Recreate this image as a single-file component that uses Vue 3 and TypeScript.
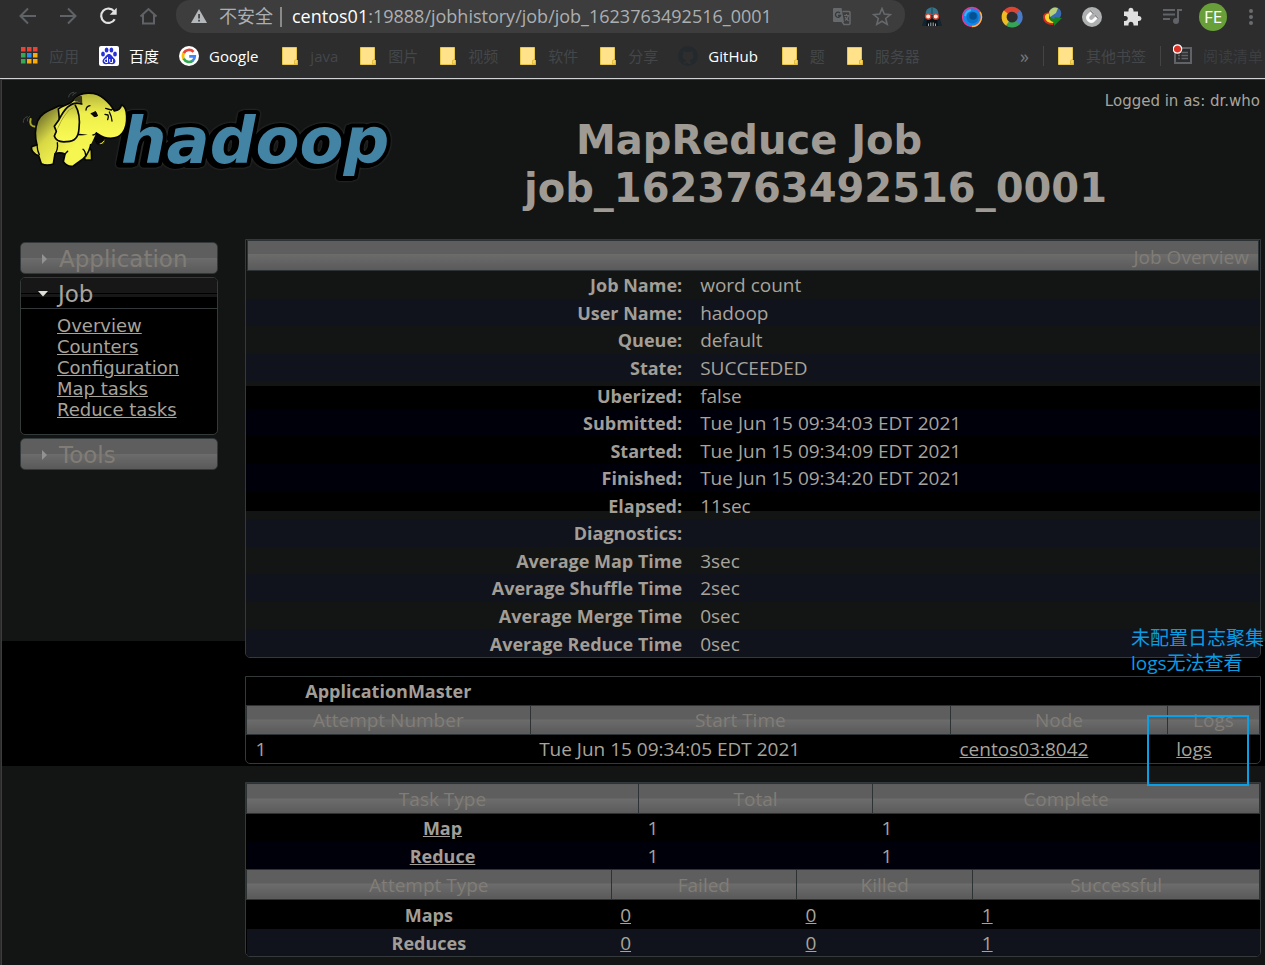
<script setup lang="ts">
interface Bookmark { label: string; icon: 'apps' | 'baidu' | 'google' | 'folder' | 'github'; bright?: boolean; latin?: boolean }
interface InfoRow { label: string; value: string; tone: string }

const bookmarks: Bookmark[] = [
  { label: '应用', icon: 'apps' },
  { label: '百度', icon: 'baidu', bright: true },
  { label: 'Google', icon: 'google', bright: true, latin: true },
  { label: 'java', icon: 'folder' },
  { label: '图片', icon: 'folder' },
  { label: '视频', icon: 'folder' },
  { label: '软件', icon: 'folder' },
  { label: '分享', icon: 'folder' },
  { label: 'GitHub', icon: 'github', bright: true, latin: true },
  { label: '题', icon: 'folder' },
  { label: '服务器', icon: 'folder' },
]

const info: InfoRow[] = [
  { label: 'Job Name:', value: 'word count', tone: '' },
  { label: 'User Name:', value: 'hadoop', tone: 'even' },
  { label: 'Queue:', value: 'default', tone: '' },
  { label: 'State:', value: 'SUCCEEDED', tone: 'even' },
  { label: 'Uberized:', value: 'false', tone: '' },
  { label: 'Submitted:', value: 'Tue Jun 15 09:34:03 EDT 2021', tone: 'even-dark' },
  { label: 'Started:', value: 'Tue Jun 15 09:34:09 EDT 2021', tone: '' },
  { label: 'Finished:', value: 'Tue Jun 15 09:34:20 EDT 2021', tone: 'even-dark' },
  { label: 'Elapsed:', value: '11sec', tone: '' },
  { label: 'Diagnostics:', value: '', tone: 'even' },
  { label: 'Average Map Time', value: '3sec', tone: '' },
  { label: 'Average Shuffle Time', value: '2sec', tone: 'even' },
  { label: 'Average Merge Time', value: '0sec', tone: '' },
  { label: 'Average Reduce Time', value: '0sec', tone: 'even' },
]

const jobLinks = ['Overview', 'Counters', 'Configuration', 'Map tasks', 'Reduce tasks']
const appColors = ['#ea4335', '#ea4335', '#ea4335', '#34a853', '#2a8cf0', '#fbab05', '#34a853', '#fbab05', '#fbab05']
</script>

<template>
  <div class="window">
    <header class="chrome">
      <div class="toolbar">
        <button class="tool" aria-label="Back">
          <svg width="20" height="20" viewBox="0 0 20 20" fill="none" stroke="#5f6368" stroke-width="2"><path d="M18 9H3M10 1.500L2.500 9l7.500 7.500" /></svg>
        </button>
        <button class="tool" aria-label="Forward">
          <svg width="20" height="20" viewBox="0 0 20 20" fill="none" stroke="#5f6368" stroke-width="2"><path d="M2 9h15M10 1.500l7.500 7.500L10 16.500" /></svg>
        </button>
        <button class="tool" aria-label="Reload">
          <svg width="20" height="20" viewBox="0 0 20 20"><path d="M16.700 12.200A7.200 7.200 0 1 1 16 4.200" fill="none" stroke="#e2e2e2" stroke-width="2.200" /><path d="M18.700 .700v7h-7z" fill="#e2e2e2" /></svg>
        </button>
        <button class="tool" aria-label="Home">
          <svg width="20" height="20" viewBox="0 0 20 20" fill="none" stroke="#5f6368" stroke-width="2"><path d="M2.500 9.500L10.500 2l8 7.500M5 8v8.500h11V8" /></svg>
        </button>
        <div class="omnibox">
          <svg width="16" height="16" viewBox="0 0 16 16"><path d="M8 0L16 14H0z" fill="#b5b8bb" /><path d="M7.200 5h1.700v4.500H7.200zM7.200 10.700h1.700v1.700H7.200z" fill="#3d3d3d" /></svg>
          <span class="insecure">不安全</span>
          <span class="bar"></span>
          <span class="url"><b>centos01</b>:19888/jobhistory/job/job_1623763492516_0001</span>
          <svg width="20" height="20" viewBox="0 0 20 20"><path d="M2 1h7.500l2.500 14H2q-1 0-1-1V2q0-1 1-1z" fill="#66696c" /><path d="M10.500 4.500H17q1 0 1 1v11q0 1-1 1h-5l-2-3" fill="none" stroke="#66696c" stroke-width="1.500" /><path d="M8 6a2.600 2.600 0 1 0 .5 2.500H6" fill="none" stroke="#37393b" stroke-width="1.300" /><path d="M12 8.500h5M14.500 7v1.500M16.500 8.500q-1 3.500-3.500 5M13 10l3.500 4" fill="none" stroke="#66696c" stroke-width="1.200" /></svg>
          <svg class="star" width="20" height="20" viewBox="0 0 20 20"><path d="M10 1.500l2.300 5.600 6 .5-4.600 3.900 1.500 5.900L10 14.200l-5.200 3.200 1.500-5.900-4.600-3.900 6-.5z" fill="none" stroke="#66696c" stroke-width="1.600" /></svg>
        </div>
        <button class="tool" aria-label="Dark reader">
          <svg width="22" height="20" viewBox="0 0 22 20"><path d="M11 0Q4 1 4 9L1 19h20L18 9Q18 1 11 0z" fill="#10252f" /><path d="M11 0Q4 1 4.500 8h13Q18 1 11 0z" fill="#35738a" /><path d="M11 0v7" stroke="#1c4657" /><path d="M6 12h10l1 7H5z" fill="#0b1115" /><circle cx="7.200" cy="9.500" r="2.700" fill="#ffeadf" stroke="#c9402e" stroke-width="1.300" /><circle cx="14.800" cy="9.500" r="2.700" fill="#ffeadf" stroke="#c9402e" stroke-width="1.300" /><path d="M7.500 16.500V19M9.800 15.500V19M12.200 15.500V19M14.500 16.500V19" stroke="#9fb0b8" /></svg>
        </button>
        <button class="tool" aria-label="Search extension">
          <svg width="22" height="22" viewBox="0 0 22 22"><circle cx="11" cy="11" r="9.500" fill="#1589ea" stroke="#e63a9b" stroke-width="1.300" /><path d="M11 20.500A9.500 9.500 0 0 0 19 6" fill="none" stroke="#ffb13d" stroke-width="1.500" /><circle cx="11.500" cy="11.500" r="6" fill="#0871cb" /><circle cx="12" cy="10" r="3.800" fill="#07508f" /><path d="M4 10Q5 5 10 4" stroke="#35b5f5" stroke-width="2" fill="none" /></svg>
        </button>
        <button class="tool" aria-label="Color ring">
          <svg width="22" height="22" viewBox="0 0 22 22" fill="none" stroke-width="5"><path d="M4.600 6.500A8 8 0 0 1 17 6" stroke="#dc4433" /><path d="M17 5.500A8 8 0 0 1 16.500 17" stroke="#4a7bc8" /><path d="M17 16.500A8 8 0 0 1 6 17.300" stroke="#35a457" /><path d="M6.500 17.500A8 8 0 0 1 4.800 6" stroke="#eebd23" /></svg>
        </button>
        <button class="tool" aria-label="Download manager">
          <svg width="22" height="20" viewBox="0 0 22 20"><path d="M10 5Q1 5 2 11q1 7 10 7l1-4q-5 0-5-4z" fill="#d22b23" /><path d="M9 6Q3 7 4 11q1 5 8 5l1-2q-5 0-5-4z" fill="#fad52c" /><circle cx="14" cy="6.500" r="6.300" fill="#3a6ab0" /><path d="M8 5Q11-1 17 1L15 6l-6 4z" fill="#b8cf78" /><path d="M8 10l5 2 1-2 7 1-8 8v-4q-4 0-5-5z" fill="#16821f" /></svg>
        </button>
        <button class="tool" aria-label="Clip">
          <svg width="22" height="22" viewBox="0 0 22 22"><circle cx="11" cy="11" r="10" fill="#aeb0b1" /><path d="M11.500 5.500L7.300 9.700a3.600 3.600 0 0 0 5 5L16.500 10.500" fill="none" stroke="#fff" stroke-width="3" /><path d="M9.300 4.500l3.200 3.200M14.200 9.300l3.200 3.200" stroke="#888" stroke-width="1.300" /></svg>
        </button>
        <button class="tool" aria-label="Extensions">
          <svg width="20" height="20" viewBox="0 0 20 20"><path d="M2 4.500h4.500V3.200a2.500 2.500 0 0 1 5 0v1.300H16V9h1a2.500 2.500 0 0 1 0 5h-1v4.500h-4.500v-1.300a2.500 2.500 0 0 0-5 0v1.300H2V14h1.300a2.500 2.500 0 0 0 0-5H2z" fill="#e0e0e0" /></svg>
        </button>
        <button class="tool" aria-label="Media">
          <svg width="20" height="18" viewBox="0 0 20 18"><path d="M1 2h12M1 6.500h12M1 11h7M16 13V2h4" fill="none" stroke="#606367" stroke-width="2" /><circle cx="14" cy="13" r="3" fill="#606367" /></svg>
        </button>
        <button class="avatar">FE</button>
        <button class="more" aria-label="Menu">
          <svg width="6" height="18" viewBox="0 0 6 18" fill="#6a6d70"><circle cx="3" cy="3" r="2" /><circle cx="3" cy="9" r="2" /><circle cx="3" cy="15" r="2" /></svg>
        </button>
      </div>

      <nav class="bookmarks">
        <a v-for="b in bookmarks" :key="b.label" href="#" class="bookmark" :class="{ bright: b.bright, latin: b.latin }">
          <svg v-if="b.icon === 'apps'" width="20" height="20" viewBox="0 0 20 20">
            <rect v-for="(c, i) in appColors" :key="i" :x="2 + (i % 3) * 6" :y="1 + Math.floor(i / 3) * 6" width="4.500" height="4.500" :fill="c" />
          </svg>
          <svg v-else-if="b.icon === 'baidu'" width="20" height="20" viewBox="0 0 20 20"><rect width="20" height="20" rx="2" fill="#fff" /><g fill="#2831d8"><ellipse cx="4" cy="8" rx="1.900" ry="2.500" /><ellipse cx="7.600" cy="4" rx="1.900" ry="2.600" /><ellipse cx="12.400" cy="4" rx="1.900" ry="2.600" /><ellipse cx="16" cy="8" rx="1.900" ry="2.500" /><path d="M10 8c2.500 0 3 2.500 5 4.200 3 2.800 1 6.300-2 6-2-.3-4-.3-6 0-3 .3-5-3.200-2-6C7 10.500 7.500 8 10 8z" /></g><path d="M8.500 11v5.500H7q-1.500-.2-1.500-1.700T7 13h1.500M10.700 13v2.500q0 1 1 1h1.800V13" fill="none" stroke="#fff" /></svg>
          <svg v-else-if="b.icon === 'google'" width="20" height="20" viewBox="0 0 20 20"><circle cx="10" cy="10" r="10" fill="#fff" /><g fill="none" stroke-width="2.700"><path d="M14.500 5.800A6 6 0 0 0 4.700 7.300" stroke="#ea4335" /><path d="M4.800 7A6 6 0 0 0 4.800 13" stroke="#fbbc05" /><path d="M4.700 12.700A6 6 0 0 0 14 14.500" stroke="#34a853" /><path d="M13.600 14.800Q15.800 13 15.800 10.300H10.200" stroke="#4285f4" /></g></svg>
          <svg v-else-if="b.icon === 'github'" width="20" height="20" viewBox="0 0 20 20"><circle cx="10" cy="10" r="10" fill="#24292e" /><path d="M7.500 19v-3q-3 .5-4-2M7.500 16q.2-1.300 1-1.800C3.500 13.500 4 9 5.500 7.500q-.4-1.500.2-2.500 1 0 2.500 1h3.600q1.500-1 2.500-1 .6 1 .2 2.500C16 9 16.500 13.500 11.500 14.200q1 .6 1 2.300V19z" fill="#2e2e2e" /></svg>
          <svg v-else width="20" height="20" viewBox="0 0 20 20"><path d="M2.500 1.500h14v12l1 1v4h-15z" fill="#ffe28a" stroke="#e8c64c" /><path d="M14.500 18v-3.500l2-1 1 1V18z" fill="#f9d65b" stroke="#d8ae28" stroke-width=".7" /></svg>
          <span>{{ b.label }}</span>
        </a>
        <button class="overflow" aria-label="More bookmarks">»</button>
        <span class="divider"></span>
        <a href="#" class="bookmark last">
          <svg width="20" height="20" viewBox="0 0 20 20"><path d="M2.500 1.500h14v12l1 1v4h-15z" fill="#ffe28a" stroke="#e8c64c" /><path d="M14.500 18v-3.500l2-1 1 1V18z" fill="#f9d65b" stroke="#d8ae28" stroke-width=".7" /></svg>
          <span>其他书签</span>
        </a>
        <span class="divider"></span>
        <a href="#" class="bookmark reading">
          <svg width="20" height="24" viewBox="0 0 20 24"><rect x="2" y="4" width="16" height="15" fill="none" stroke="#5f6368" stroke-width="2" /><path d="M5 8.500h2M5 11.500h2M5 14.500h2M8.500 8.500h6.500M8.500 11.500h6.500M8.500 14.500h6.500" stroke="#5f6368" stroke-width="1.500" /><circle cx="4.500" cy="5" r="4.200" fill="#dc3226" stroke="#fff" stroke-width="1.200" /></svg>
          <span>阅读清单</span>
        </a>
      </nav>
    </header>

    <div class="page">
      <div class="masthead">
        <svg class="logo" width="376" height="100" viewBox="0 0 376 100" role="img" aria-label="hadoop">
          <defs>
            <linearGradient id="hide" x1="0" y1="0" x2="0" y2="1"><stop offset="0" stop-color="#b5b53c" /><stop offset=".45" stop-color="#eeee4c" /><stop offset="1" stop-color="#fbfb55" /></linearGradient>
            <linearGradient id="back" x1="0" y1="0" x2="1" y2="1"><stop offset="0" stop-color="#3c3c20" /><stop offset=".4" stop-color="#d8d846" /><stop offset=".7" stop-color="#f6f650" /></linearGradient>
          </defs>
          <text x="101" y="78" class="word">hadoop</text>
          <g transform="scale(.3333)" stroke="#050505" stroke-width="5" stroke-linejoin="round" stroke-linecap="round">
            <path d="M46 125Q26 124 32 102" fill="none" stroke="#a6a62c" stroke-width="6" />
            <path d="M10 112q-1-14 12-17M22 108q-2-9 7-14M146 36q1-12 15-14M158 31q2-7 10-8" fill="none" stroke="#444" stroke-width="3" />
            <path d="M185 198L196 225H215L214 196L200 180z" fill="#d6d62e" />
            <path d="M118 62C92 76 63 82 53 108C43 135 47 165 51 180L36 184C30 194 44 210 56 212L64 236Q80 244 100 237L105 207Q118 200 135 207L130 230Q145 248 160 243L190 221Q211 202 214 165L200 70z" fill="url(#back)" />
            <path d="M51 180q1 18 7 29M112 173q3 20-7 34M135 207l8-8M189 193q8 6 8 22" fill="none" stroke-width="4" />
            <path d="M225 145Q222 173 238 178Q256 174 257 153z" fill="#080808" />
            <path d="M236 175q13-2 19-17q3 12-8 20q-7 4-11-3z" fill="#d6d62e" stroke-width="3" />
            <path d="M115 72C130 58 146 63 161 45C178 18 228 18 252 41C269 55 277 66 283 78Q301 76 305 59Q320 66 320 94C322 138 302 160 272 160C254 160 242 153 231 145Q215 158 197 151L122 142z" fill="url(#hide)" />
            <path d="M176 152L205 149Q217 150 228 146L214 176L176 185z" fill="#f4f44f" stroke="none" />
            <path d="M161 45Q174 30 186 34L187 59Q178 48 168 50z" fill="#38381d" stroke="none" />
            <path d="M185 57C150 45 130 79 117 104L103 124L109 139L103 153Q109 173 139 170C167 171 176 155 177 130Q182 87 166 61" fill="url(#hide)" />
            <path d="M109 139Q122 104 140 83Q150 70 164 67L148 75Q128 98 119 119z" fill="#68682b" stroke="none" />
            <path d="M198 75q1-11 12-13M214 86q8-3 12-6M227 94l5-3M257 70l17 5 4-4M255 88l9 2q3 7-1 14M268 81q7 13 8 27M219 150q7 0 10-7" fill="none" stroke-width="4" />
            <path d="M214 88q7-9 16-6l3 8-10 7z" fill="#080808" stroke="none" />
          </g>
        </svg>
        <h1><span class="lead">MapReduce Job</span><span>job_1623763492516_0001</span></h1>
        <div class="login">Logged in as: dr.who</div>
      </div>

      <div class="columns">
        <aside class="nav">
          <h3><button class="fold"><svg width="14" height="14" viewBox="0 0 14 14"><path d="M5 2l5 5-5 5z" fill="#929292" /></svg>Application</button></h3>
          <div class="open">
            <h3><button class="fold active"><svg width="14" height="14" viewBox="0 0 14 14"><path d="M2 4h10L7 9.500z" fill="#deded8" /></svg>Job</button></h3>
            <ul>
              <li v-for="l in jobLinks" :key="l"><a href="#">{{ l }}</a></li>
            </ul>
          </div>
          <h3><button class="fold"><svg width="14" height="14" viewBox="0 0 14 14"><path d="M5 2l5 5-5 5z" fill="#929292" /></svg>Tools</button></h3>
        </aside>

        <main>
          <section class="panel overview">
            <div class="bar-head">Job Overview</div>
            <table class="info">
              <tbody>
                <tr v-for="r in info" :key="r.label" :class="r.tone">
                  <th scope="row">{{ r.label }}</th>
                  <td>{{ r.value }}</td>
                </tr>
              </tbody>
            </table>
          </section>

          <section class="attempts">
            <div class="panel black">
              <table class="grid masters">
                <colgroup><col class="m1" /><col class="m2" /><col class="m3" /><col class="m4" /></colgroup>
                <tbody>
                  <tr class="title"><th>ApplicationMaster</th><td colspan="3"></td></tr>
                  <tr class="head"><th>Attempt Number</th><th>Start Time</th><th>Node</th><th>Logs</th></tr>
                  <tr><td>1</td><td>Tue Jun 15 09:34:05 EDT 2021</td><td><a href="#">centos03:8042</a></td><td><a href="#">logs</a></td></tr>
                </tbody>
              </table>
            </div>
            <div class="note">未配置日志聚集<br />logs无法查看</div>
            <div class="marker"></div>
          </section>

          <section class="panel black tasks">
            <table class="grid">
              <colgroup><col class="t1" /><col class="t2" /><col /></colgroup>
              <tbody>
                <tr class="head"><th>Task Type</th><th>Total</th><th>Complete</th></tr>
                <tr class="map"><th><a href="#">Map</a></th><td>1</td><td>1</td></tr>
                <tr class="even-dark"><th><a href="#">Reduce</a></th><td>1</td><td>1</td></tr>
              </tbody>
            </table>
            <table class="grid">
              <colgroup><col class="a1" /><col class="a2" /><col class="a3" /><col /></colgroup>
              <tbody>
                <tr class="head"><th>Attempt Type</th><th>Failed</th><th>Killed</th><th>Successful</th></tr>
                <tr class="tall"><th>Maps</th><td><a href="#">0</a></td><td><a href="#">0</a></td><td><a href="#">1</a></td></tr>
                <tr class="even"><th>Reduces</th><td><a href="#">0</a></td><td><a href="#">0</a></td><td><a href="#">1</a></td></tr>
              </tbody>
            </table>
          </section>
        </main>
      </div>
    </div>
  </div>
</template>

<style>
html { background: #131514; }
body { margin: 0; background: #2d2d2d; }
</style>

<style scoped>
* { box-sizing: border-box; }
.window { min-height: 100vh; display: flex; flex-direction: column; overflow: hidden; color: #a8a49c; font: 18px "Open Sans", "Noto Sans CJK SC", sans-serif; }
a { color: inherit; }
button { border: 0; padding: 0; background: none; color: inherit; font: inherit; }
svg { flex: none; }

.chrome { background: #2d2d2d; border-bottom: 1px solid #d0d2d3; }
.toolbar { display: flex; align-items: center; height: 33px; padding-left: 8px; }
.tool { display: flex; justify-content: center; align-items: center; width: 40px; flex: none; height: 32px; }
.omnibox { flex: 1; min-width: 0; height: 33px; margin: 0 7px 0 8px; padding: 0 13px 0 15px; display: flex; align-items: center; border-radius: 14px 14px 18px 18px; background: #3d3d3d; color: #acafb2; white-space: nowrap; }
.insecure { margin-left: 12px; line-height: 24px; padding-bottom: 2px; }
.bar { width: 2px; height: 20px; margin: 0 10px 0 7px; background: #8a8a8a; }
.url { flex: 1; overflow: hidden; line-height: 26px; padding-bottom: 2px; }
.url b { font-weight: 400; color: #fff; }
.star { margin-left: 20px; }
.avatar { width: 28px; height: 28px; margin: 0 13px 0 7px; border-radius: 50%; background: #689f38; color: #fff; font-size: 17px; line-height: 28px; flex: none; }
.more { width: 21px; height: 20px; margin-right: 4px; flex: none; }

.bookmarks { display: flex; align-items: center; height: 45px; padding-left: 19px; font-size: 15px; line-height: 20px; white-space: nowrap; overflow: hidden; }
.bookmark { display: flex; align-items: center; gap: 10px; margin-right: 20px; color: #43474a; text-decoration: none; flex: none; }
.bright { color: #fff; }
.latin { margin-right: 22px; }
.overflow { margin-left: auto; color: #74787c; font-size: 18px; }
.divider { width: 1px; height: 20px; margin: 0 12px 0 14px; background: #424446; flex: none; }
.last { margin-right: 0; }
.reading { margin-right: 2px; color: #3b3e40; }

.page { flex: 1; margin-left: 1px; border-left: 1px solid #3a3d3e; border-top: 1px solid #333a3d; background: linear-gradient(#131514 561px, #000 561px, #000 686px, #131514 686px); padding-bottom: 10px; }
.masthead { display: flex; align-items: flex-start; position: relative; height: 159px; font-family: "DejaVu Sans", sans-serif; }
.logo { margin: 5px 0 0 18px; overflow: visible; }
.word { font: italic bold 64px "DejaVu Sans", sans-serif; fill: #4383a4; stroke: #000; stroke-width: 8px; stroke-linejoin: round; paint-order: stroke; filter: drop-shadow(-3px 1px 0 #000) drop-shadow(0 0 1px #3a3c3b); }
h1 { margin: 36px 0 0; flex: 1; padding-left: 128px; font-size: 40px; line-height: 48px; color: #9f9b94; white-space: nowrap; }
h1 span { display: block; }
h1 .lead { padding-left: 52px; }
.login { position: absolute; top: 11px; right: 5px; font-size: 15px; line-height: 20px; }

.columns { display: flex; gap: 27px; padding: 0 4px 0 18px; }
.nav { width: 198px; flex: none; margin-top: 3px; font-family: "DejaVu Sans", sans-serif; }
h3 { margin: 0; font-size: 23px; font-weight: 400; }
.fold { display: flex; align-items: center; gap: 8px; width: 100%; height: 32px; padding: 2px 0 0 16px; border: 1px solid #33393b; border-radius: 5px; color: #817d76; line-height: 28px; background: linear-gradient(#5e5e5e 50%, #6c6c6c 50%, #595959); }
.open { margin: 3px 0; border: 1px solid #34393a; border-radius: 5px; background: #000; overflow: hidden; }
.open .fold { padding-left: 15px; height: 31px; border-width: 0 0 1px; border-radius: 0; color: #a8a49c; background: linear-gradient(#171717 15px, #000 15px, #000 16px, #171717 16px, #171717 19px, #000 19px); }
ul { margin: 0; padding: 6px 0 14px 36px; list-style: none; font-size: 18px; line-height: 21px; }

main { flex: 1; min-width: 0; }
.panel { border: 1px solid #34393b; border-radius: 0 0 5px 5px; overflow: hidden; }
.black { background: #000; }
.overview { background: linear-gradient(#131514 146px, #000 146px, #000 271px, #131514 271px); }
.bar-head { margin: 0 1px; height: 31px; border: 1px solid #2d3235; padding-right: 9px; font-size: 19px; line-height: 33px; text-align: right; color: #817d76; background: linear-gradient(#5e5e5e 45%, #6c6c6c 45%, #5a5a5a); }
table { width: 100%; border-collapse: collapse; line-height: 25px; }
th { padding: 2px 0 0; font-size: 18px; color: #a29e97; }
td { padding: 2px 9px 0; font-size: 19px; }
.info { height: 386px; }
.info th { width: 44%; padding-right: 10px; text-align: right; }
.info td { padding-left: 8px; }
.even { background: #10131b; }
.even-dark { background: #00000a; }

.attempts { position: relative; margin: 18px 0; }
.grid { table-layout: fixed; }
.grid th { height: 27px; text-align: center; }
.masters td { height: 29px; }
.masters .title > * { height: 28px; }
.grid .head th { height: 29px; border: 1px solid #2d3235; font-size: 19px; font-weight: 400; color: #817d76; background: linear-gradient(#5e5e5e 50%, #6c6c6c 50%, #5a5a5a); }
.tasks .head th { height: 30px; }
.tasks .map > * { height: 28px; }
.tasks .tall > * { height: 30px; }
.m1 { width: 28%; } .m2 { width: 41.5%; } .m3 { width: 21.4%; } .m4 { width: 9.1%; }
.t1 { width: 38.7%; } .t2 { width: 23.1%; }
.a1 { width: 36%; } .a2 { width: 18.3%; } .a3 { width: 17.4%; }
.note { position: absolute; top: -50px; right: -3px; width: 133px; color: #0b9be2; font-size: 19px; line-height: 25px; white-space: nowrap; }
.marker { position: absolute; top: 39px; right: 12px; width: 102px; height: 71px; border: 2px solid #0b9fe6; }
</style>
